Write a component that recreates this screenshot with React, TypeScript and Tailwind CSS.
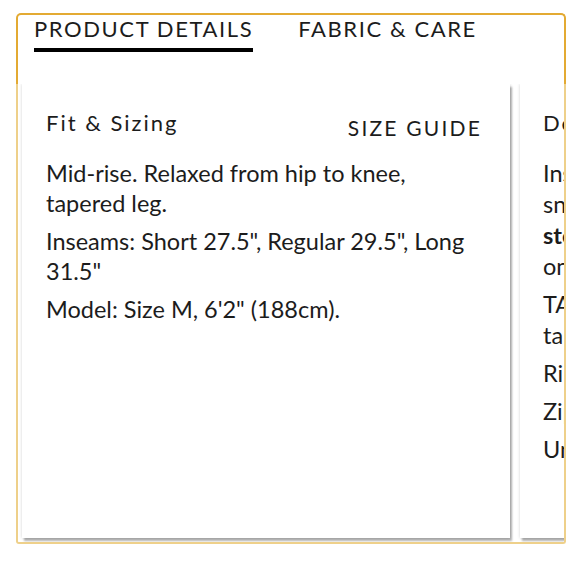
import React from "react";

const font = { fontFamily: "Lato, 'Noto Sans', sans-serif" };

export default function App() {
  const lines2: { t: string; b?: boolean; gap?: boolean }[] = [
    { t: "Inseam pocket with" },
    { t: "snap closure for" },
    { t: "storage", b: true },
    { t: "on the go." },
    { t: "TAPERED: slim,", gap: true },
    { t: "tapered leg." },
    { t: "Ribbed cuffs.", gap: true },
    { t: "Zip pockets.", gap: true },
    { t: "Unlined.", gap: true },
  ];
  return (
    <div className="w-[580px] h-[580px] bg-white overflow-hidden text-[#1c1c1c]" style={font}>
      <div className="ml-[16px] mt-[13px] w-[550px] h-[531px] flex flex-col">
        <div className="h-[71px] border-t-2 border-x-2 border-[#e3aa33] rounded-t-[5px] flex pl-[16px] gap-[45px]">
          <div className="flex flex-col">
            <div className="text-[22px] leading-[28px] tracking-[1.6px]">PRODUCT DETAILS</div>
            <div className="h-[4px] bg-black mt-[5px]" />
          </div>
          <div className="text-[22px] leading-[28px] tracking-[1.6px]">FABRIC &amp; CARE</div>
        </div>
        <div className="flex-1 border-x-2 border-b-2 border-[#eed08a] rounded-b-[3px] overflow-hidden flex gap-[10px] pl-[4px]">
          <div className="w-[488px] h-[454px] shrink-0 bg-white shadow-[0_0_3px_rgba(0,0,0,0.18),2px_3px_2px_rgba(0,0,0,0.3)] px-[24px] pt-[24px]">
            <div className="flex justify-between items-start">
              <div className="text-[22px] leading-[30px] tracking-[2px]">Fit &amp; Sizing</div>
              <div className="text-[21px] leading-[30px] tracking-[2.2px] mt-[5px] mr-[4px]">SIZE GUIDE</div>
            </div>
            <div className="mt-[15px] text-[23.5px] leading-[30px]">
              <p>Mid-rise. Relaxed from hip to knee, tapered leg.</p>
              <p className="mt-[8px]">Inseams: Short 27.5", Regular 29.5", Long 31.5"</p>
              <p className="mt-[8px]">Model: Size M, 6'2" (188cm).</p>
            </div>
          </div>
          <div className="w-[300px] h-[454px] shrink-0 bg-white shadow-[0_0_3px_rgba(0,0,0,0.18),2px_3px_2px_rgba(0,0,0,0.3)] px-[23px] pt-[24px]">
            <div className="text-[22px] leading-[30px] tracking-[2px] whitespace-nowrap">Details</div>
            <div className="mt-[20px] text-[23.5px] leading-[31px] whitespace-nowrap">
              {lines2.map((l, i) => (
                <div key={i} className={(l.b ? "font-bold " : "") + (l.gap ? "mt-[7px]" : "")}>
                  {l.t}
                </div>
              ))}
            </div>
          </div>
        </div>
      </div>
    </div>
  );
}
